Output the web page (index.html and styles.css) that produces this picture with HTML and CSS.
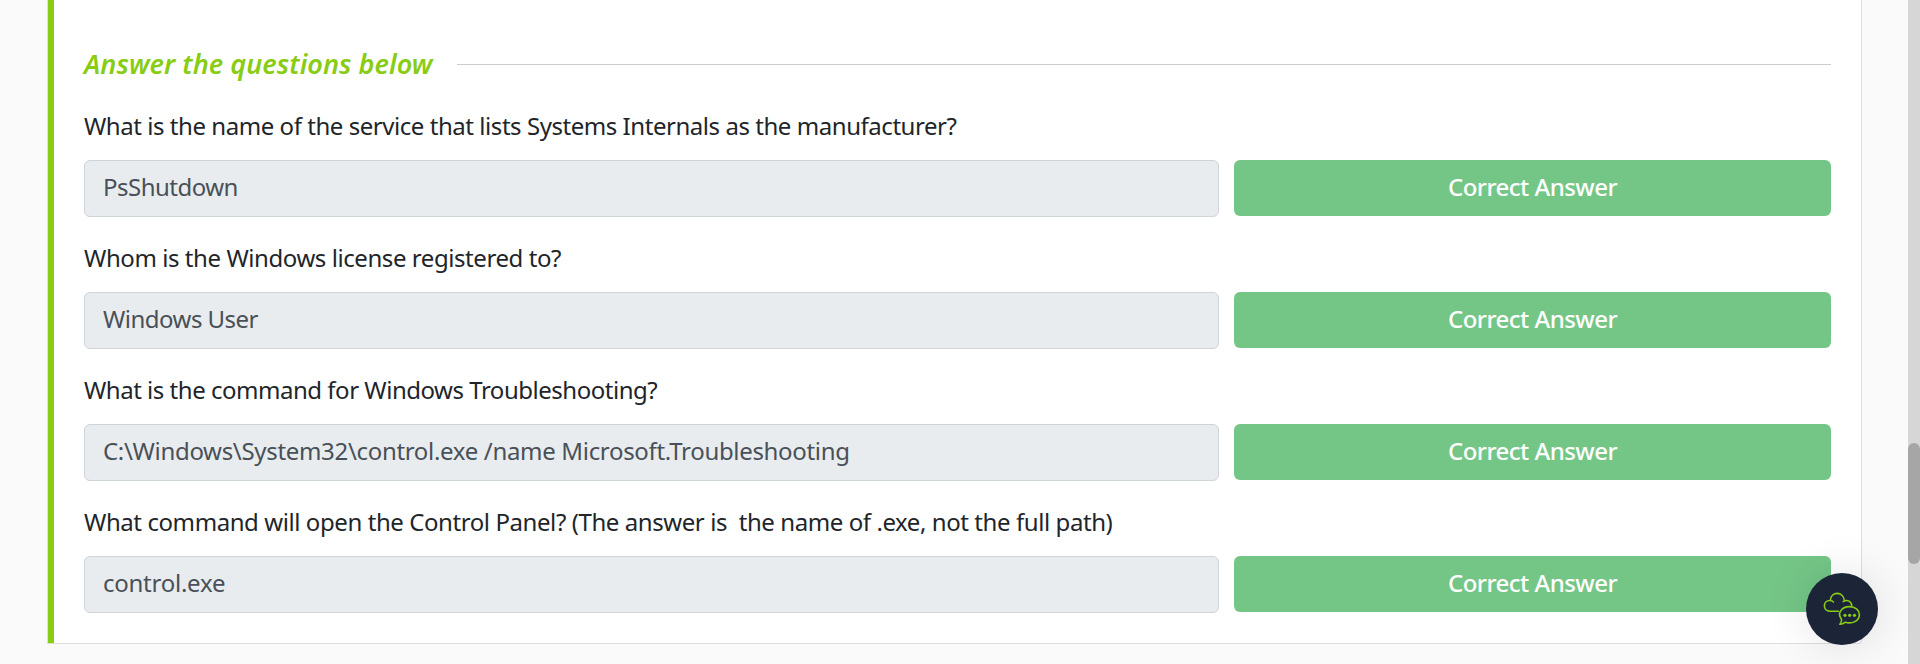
FILE: index.html
```
<!DOCTYPE html>
<html lang="en">
<head>
<meta charset="utf-8">
<title>Questions</title>
<link rel="stylesheet" href="styles.css">
</head>
<body>
<main class="card">
  <header class="heading"><h2 class="heading-title">Answer the questions below</h2><div class="rule"></div></header>
  <section class="question">
    <p class="label label-service">What is the name of the service that lists Systems Internals as the manufacturer?</p>
    <div class="row"><div class="field">PsShutdown</div><button class="button">Correct Answer</button></div>
  </section>
  <section class="question">
    <p class="label label-license">Whom is the Windows license registered to?</p>
    <div class="row"><div class="field">Windows User</div><button class="button">Correct Answer</button></div>
  </section>
  <section class="question">
    <p class="label label-trouble">What is the command for Windows Troubleshooting?</p>
    <div class="row"><div class="field field-path">C:\Windows\System32\control.exe /name Microsoft.Troubleshooting</div><button class="button">Correct Answer</button></div>
  </section>
  <section class="question">
    <p class="label">What command will open the Control Panel? (The answer is&nbsp; the name of .exe, not the full path)</p>
    <div class="row"><div class="field field-exe">control.exe</div><button class="button">Correct Answer</button></div>
  </section>
</main>
<div class="scrollbar"><div class="thumb"></div></div>
<div class="chat">
  <svg width="72" height="72" viewBox="0 0 72 72" fill="none" stroke="#88cc14" stroke-width="1.6" stroke-linecap="round" stroke-linejoin="round">
    <path d="M32.500 38.200H24C16.500 38 16.500 27.500 24 27.500Q26.300 27.500 27.500 29M24.300 27.300C25 18 37.500 18 38.400 27.700M37.200 28.600C41.500 26 45.500 28.500 45.700 32.600"/>
    <path d="M35.600 46.400C30.500 40 36 33.600 43.500 33.600C49.200 33.600 53.400 37.200 53.400 41.800C53.400 48 46 51.300 39.300 49.200Q37 51.300 33.800 51.300Q35.800 49.500 35.600 46.400Z"/>
    <g fill="#88cc14" stroke="none"><circle cx="39" cy="42.300" r="1.600"/><circle cx="43.700" cy="42.300" r="1.600"/><circle cx="48.500" cy="42.300" r="1.600"/></g>
  </svg>
</div>
</body>
</html>
```
FILE: styles.css
```
body{margin:0;height:664px;background:#fafafa;overflow:hidden;font-family:"Noto Sans",sans-serif;font-size:24px;color:#212529;display:flex;justify-content:space-between}
.card{box-sizing:border-box;width:1815px;height:644px;margin-left:47px;padding:46px 30px 0 36px;background:#fff;border:1px solid #dcdee0;border-top:0;box-shadow:inset 6px 0 #88cc14;border-radius:0 0 4px 1px}
.heading{display:flex;align-items:center;height:37px;margin-bottom:25px}
.heading-title{box-sizing:border-box;width:350px;margin:0;padding-bottom:2px;font-size:27px;line-height:37px;font-style:italic;font-weight:600;letter-spacing:.05px;white-space:nowrap;color:#88cc14}
.rule{height:1px;flex:1;background:#ccc;margin-left:23px}
.question{height:132px}
.label{margin:0 0 16px;line-height:36px;white-space:nowrap;letter-spacing:-.42px}
.label-service{letter-spacing:-.45px}
.label-trouble{letter-spacing:-.48px}
.label-license{letter-spacing:-.43px}
.row{display:flex;gap:15px}
.field{box-sizing:border-box;width:1135px;height:57px;background:#e8ecef;border:1px solid #ced4da;border-radius:6px;padding-left:18px;line-height:52px;color:#495057;letter-spacing:-.52px}
.field-path{letter-spacing:-.32px}
.field-exe{letter-spacing:-.25px}
.button{flex:1;height:56px;border:0;border-radius:6px;padding:0 0 4px;background:#74c687;color:#fff;font:500 24px "Noto Sans",sans-serif;letter-spacing:-.52px}
.scrollbar{display:flow-root;width:12px;height:664px;background:#d6d6d6}
.thumb{height:121px;margin-top:443px;border-radius:6px;background:#a6a6a6}
.chat{position:absolute;left:1806px;top:573px;width:72px;height:72px;border-radius:50%;background:#1c2538;box-shadow:0 0 45px rgba(0,0,0,.12)}
```
